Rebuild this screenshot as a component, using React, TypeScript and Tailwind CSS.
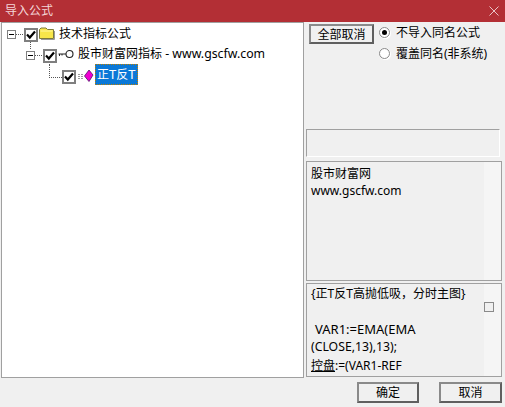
import React from 'react';

const font = "font-['Noto_Sans','Noto_Sans_CJK_SC',sans-serif]";

const Check = ({ stem }: { stem?: boolean }) => (
  <span className="relative mt-[3px] flex h-[14px] w-[14px] shrink-0 items-center justify-center border-2 border-[#7f7f7f] bg-white">
    <svg width="10" height="10" viewBox="0 0 10 10">
      <path d="M1 4.5 L3.8 7.5 L9 1.5" fill="none" stroke="#000" strokeWidth="2.2" />
    </svg>
    {stem && <span className="absolute left-[4px] top-[12px] h-[7px] border-l border-dotted border-[#555]" />}
  </span>
);

const Expander = () => (
  <span className="relative mt-[1px] block h-[9px] w-[9px] shrink-0 border border-[#808080] bg-white">
    <span className="absolute left-[1px] top-[3px] h-px w-[5px] bg-black" />
  </span>
);

const Dots = ({ className }: { className: string }) => (
  <span className={`shrink-0 border-dotted border-[#555] ${className}`} />
);

const Folder = () => (
  <svg width="16" height="13" viewBox="0 0 16 13" className="shrink-0">
    <path d="M0.5 11.5 V2.5 L2 1 H7 L8.5 2.5 H14.5 V11.5 Z" fill="#f7e64a" stroke="#7d7a3a" />
    <path d="M1.5 4 H13.5" stroke="#fff7a0" />
    <path d="M15.5 4 V12.5 H2" stroke="#9a9a9a" fill="none" />
  </svg>
);

const KeyIcon = () => (
  <svg width="16" height="10" viewBox="0 0 16 10" className="shrink-0">
    <circle cx="11.5" cy="5" r="3.5" fill="#fff" stroke="#222" strokeWidth="1.1" />
    <path d="M8 5 H0.5 M1.5 5 V7 M4 5 V6.5" stroke="#222" fill="none" />
  </svg>
);

const Gem = () => (
  <svg width="16" height="14" viewBox="0 0 16 14" className="shrink-0">
    <path d="M0 5.5 H6 M0 7.5 H6 M0 9.5 H5" stroke="#9a9a9a" strokeDasharray="2 1" />
    <path d="M11 1 L15 6 L11 12.5 L6.5 7 Z" fill="#f000d0" stroke="#50106a" strokeWidth="0.8" />
  </svg>
);

const Button = ({ label, className }: { label: string; className: string }) => (
  <button className={`${className} border-2 border-[#5f5f5f] bg-[#f0f0f0] text-[12px] text-black border-t-[#8a8a8a] border-l-[#8a8a8a]`}>
    {label}
  </button>
);

const Radio = ({ label, checked }: { label: string; checked?: boolean }) => (
  <div className="flex h-[21px] items-center">
    <span className="flex h-[11px] w-[11px] items-center justify-center rounded-full border border-[#8a8a8a] bg-white shadow-[1px_1px_0_#fff]">
      {checked && <span className="h-[5px] w-[5px] rounded-full bg-black" />}
    </span>
    <span className="ml-[6px] text-[12px] text-black">{label}</span>
  </div>
);

export default function App() {
  return (
    <div className={`flex h-[407px] w-[505px] flex-col overflow-hidden bg-[#f0f0f0] ${font}`}>
      {/* Title bar */}
      <div className="flex h-[22px] shrink-0 items-center justify-between bg-[#b32f35] pl-[5px] pr-[6px]">
        <span className="text-[12px] text-[#f3d6d8]">导入公式</span>
        <svg width="10" height="10" viewBox="0 0 10 10">
          <path d="M0.5 0.5 L9.5 9.5 M9.5 0.5 L0.5 9.5" stroke="#e9c4c6" />
        </svg>
      </div>

      <div className="flex h-[356px] shrink-0 pl-px">
        {/* Tree */}
        <div className="h-full w-[303px] shrink-0 border border-[#a0a0a0] bg-white text-[12px] text-black">
          <div className="flex h-[21px] items-center pl-[5px]">
            <Expander />
            <Dots className="mr-[1px] mt-[1px] w-[7px] border-t" />
            <Check stem />
            <span className="ml-[1px]"><Folder /></span>
            <span className="ml-[4px]">技术指标公式</span>
          </div>
          <div className="flex h-[21px] items-center pl-[24px]">
            <Expander />
            <Dots className="mr-[1px] mt-[1px] w-[7px] border-t" />
            <Check />
            <span className="mb-[2px] ml-[1px]"><KeyIcon /></span>
            <span className="ml-[4px]">股市财富网指标<span className="text-[12.3px]"> - www.gscfw.com</span></span>
          </div>
          <div className="flex h-[21px] items-center pl-[47px]">
            <Dots className="mb-[9px] h-[14px] w-[13px] border-b border-l" />
            <Check />
            <span className="ml-[2px]"><Gem /></span>
            <span className="mb-[3px] ml-[1px] border border-dotted border-[#c08000] bg-[#0a78d7] px-px text-[13px] leading-[18px] text-white">
              <span className="text-[12px]">正</span>T<span className="text-[12px]">反</span>T
            </span>
          </div>
        </div>

        {/* Right column */}
        <div className="ml-px flex min-w-0 flex-1 flex-col pl-[1px] pr-[3px]">
          <div className="flex h-[107px] shrink-0 items-start pl-[3px] pt-[2px]">
            <Button label="全部取消" className="h-[20px] w-[65px]" />
            <div className="ml-[5px] mt-[-2px]">
              <Radio label="不导入同名公式" checked />
              <Radio label="覆盖同名(非系统)" />
            </div>
          </div>
          <div className="h-[28px] w-[194px] shrink-0 border border-[#a0a0a0] border-b-white border-r-white bg-[#f0f0f0]" />
          <div className="mt-[4px] h-[120px] shrink-0 border border-[#a0a0a0] bg-[linear-gradient(to_right,#f0f0f0_177px,#f5f5f5_177px)] px-[4px] pt-[3px] text-[12px] leading-[18px] text-black">
            <div>股市财富网</div>
            <div className="mt-[-1px]">www.gscfw.com</div>
          </div>
          <div className="relative mt-[2px] h-[94px] shrink-0 border border-[#a0a0a0] bg-[linear-gradient(to_right,#f0f0f0_177px,#f5f5f5_177px)] pl-[4px] pr-[24px] pt-[1px] text-[12.25px] leading-[18px] text-black">
            <div className="whitespace-nowrap text-[12px]">{'{正T反T高抛低吸，分时主图}'}</div>
            <div className="h-[17px]" />
            <div className="pl-[4px] text-[13px]">VAR1:=EMA(EMA</div>
            <div>(CLOSE,13),13);</div>
            <div className="mt-px text-[12px]"><span className="underline">控盘</span>:=(VAR1-REF</div>
            <span className="absolute right-[7px] top-[18px] h-[10px] w-[10px] border border-[#8a8a8a] bg-[#f0f0f0]" />
          </div>
        </div>
      </div>

      {/* Footer buttons */}
      <div className="flex flex-1 items-start justify-end gap-[20px] pr-[3px] pt-[4px]">
        <Button label="确定" className="h-[21px] w-[62px]" />
        <Button label="取消" className="h-[21px] w-[63px]" />
      </div>
    </div>
  );
}
